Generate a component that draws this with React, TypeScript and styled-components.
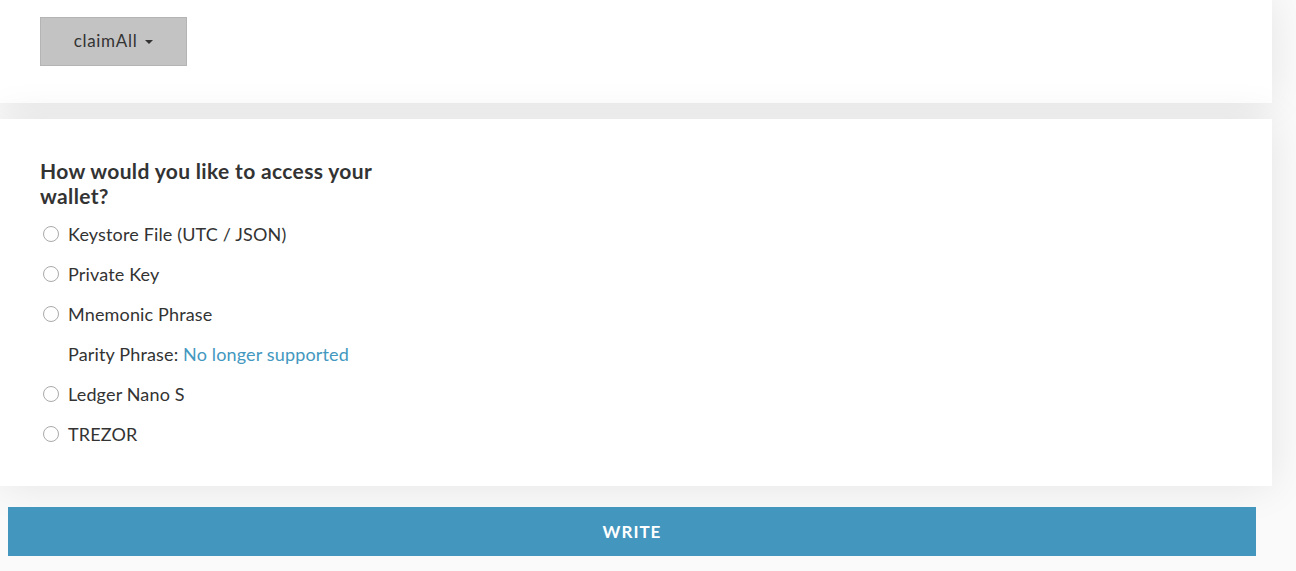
import React from 'react'
import styled, { createGlobalStyle } from 'styled-components'

const GlobalStyle = createGlobalStyle`
  body {
    margin: 0;
    background: #fafafa;
    font-family: Lato, "Open Sans", sans-serif;
    color: #333;
  }
`

interface Option {
  label: string;
  note?: boolean;
}

const options: Option[] = [
  { label: 'Keystore File (UTC / JSON)' },
  { label: 'Private Key' },
  { label: 'Mnemonic Phrase' },
  { label: 'Parity Phrase', note: true },
  { label: 'Ledger Nano S' },
  { label: 'TREZOR' },
]

const App: React.FC = () => {
  return (
    <Page>
      <GlobalStyle />
      <Panel height={103}>
        <Dropdown>
          claimAll <Caret />
        </Dropdown>
      </Panel>
      <Panel height={367} gap={16}>
        <Heading>How would you like to access your wallet?</Heading>
        <OptionList>
          {options.map(o =>
            o.note ? (
              <Note key={o.label}>
                Parity Phrase: <a>No longer supported</a>
              </Note>
            ) : (
              <OptionRow key={o.label}>
                <Radio />
                {o.label}
              </OptionRow>
            )
          )}
        </OptionList>
      </Panel>
      <WriteButton>WRITE</WriteButton>
    </Page>
  )
}
export default App

const Page = styled.div`
  width: 1272px;
  display: flex;
  flex-direction: column;
`

const Panel = styled.section<{ height: number; gap?: number }>`
  height: ${p => p.height}px;
  margin-top: ${p => p.gap || 0}px;
  box-sizing: border-box;
  background: #fff;
  box-shadow: 0 0 40px rgba(0, 0, 0, 0.09);
  padding: ${p => (p.gap ? '39px' : '17px')} 40px 0;
`

const Dropdown = styled.button`
  display: inline-flex;
  align-items: center;
  justify-content: center;
  gap: 8px;
  width: 147px;
  height: 49px;
  background: #c3c3c3;
  border: 1px solid #b4b4b4;
  border-radius: 0;
  font-family: Lato, sans-serif;
  font-size: 17px;
  letter-spacing: 0.7px;
  color: #333;
  padding: 0 0 2px;
`

const Caret = styled.span`
  display: inline-block;
  width: 0;
  height: 0;
  margin-top: 2px;
  border-left: 4px solid transparent;
  border-right: 4px solid transparent;
  border-top: 4px solid #333;
`

const Heading = styled.h3`
  margin: 0;
  max-width: 350px;
  font-size: 21px;
  letter-spacing: 0.35px;
  line-height: 25px;
  font-weight: 700;
  color: #333;
`

const OptionList = styled.div`
  display: flex;
  flex-direction: column;
  margin-top: 6px;
`

const OptionRow = styled.label`
  display: flex;
  align-items: center;
  height: 40px;
  font-size: 18px;
  letter-spacing: 0.15px;
  color: #333;
`

const Radio = styled.span`
  width: 14px;
  height: 14px;
  margin: 0 9px 0 3px;
  border: 1px solid #a9a9a9;
  border-radius: 50%;
  background: #fff;
  flex-shrink: 0;
`

const Note = styled.div`
  display: flex;
  align-items: center;
  height: 40px;
  padding-left: 28px;
  font-size: 18px;
  letter-spacing: 0.15px;
  color: #333;
  white-space: pre;

  a {
    color: #4398c0;
  }
`

const WriteButton = styled.button`
  margin: 21px 16px 0 8px;
  height: 49px;
  border: none;
  background: #4396be;
  color: #fff;
  font-family: Lato, sans-serif;
  font-weight: 700;
  font-size: 17px;
  letter-spacing: 1px;
`
